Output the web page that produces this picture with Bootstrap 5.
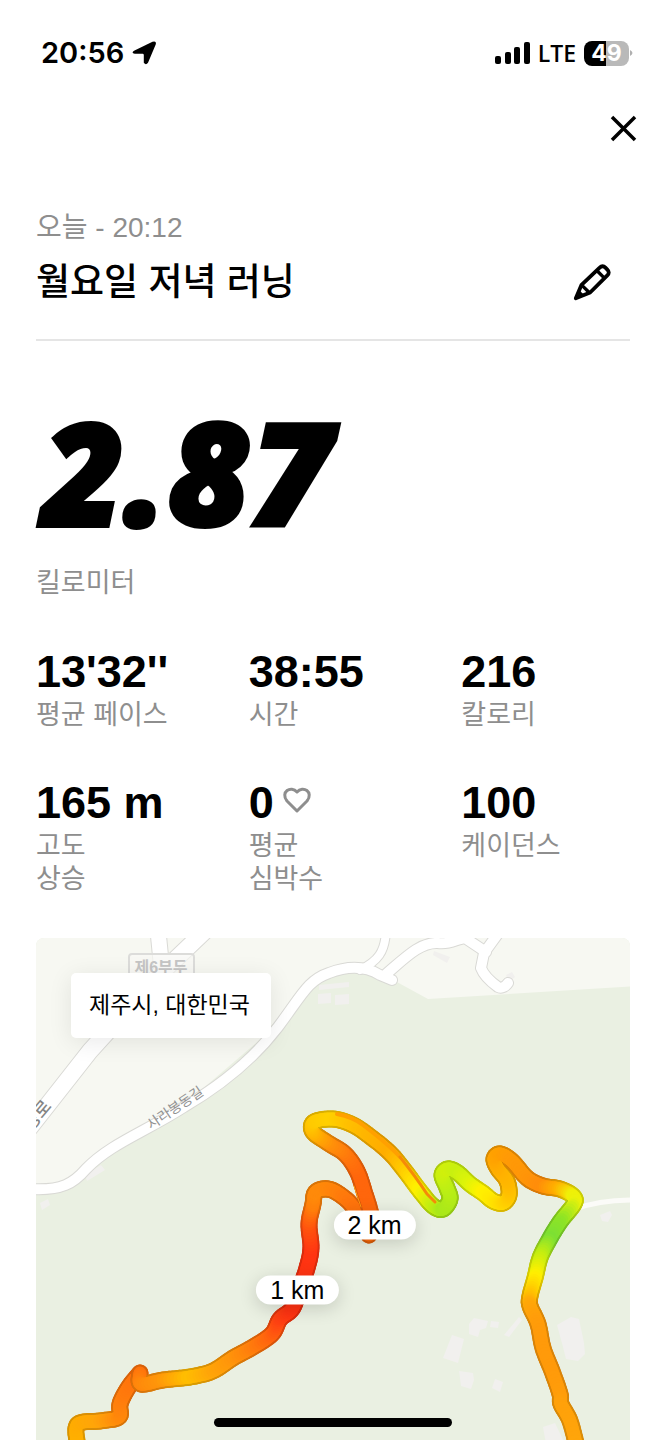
<!DOCTYPE html>
<html lang="ko">
<head>
<meta charset="utf-8">
<meta name="viewport" content="width=device-width, initial-scale=1">
<title>월요일 저녁 러닝</title>
<link href="https://cdn.jsdelivr.net/npm/bootstrap@5.3.0/dist/css/bootstrap.min.css" rel="stylesheet">
<style>
  body { font-family: "Liberation Sans", "Noto Sans CJK KR", sans-serif; color: #000; background: #fff; }
  .side { padding-left: 36px; padding-right: 36px; }
  .statusbar { height: 106px; padding: 0 33px 0 41px; font-family: Inter, "Noto Sans CJK KR", sans-serif; }
  .clock { font-size: 29px; font-weight: 600; line-height: 32px; }
  .lte { font-family: "Open Sans", sans-serif; font-size: 23px; font-weight: 600; line-height: 32px; }
  .battery { width: 45px; height: 25px; border-radius: 8px; background: linear-gradient(90deg, #000 49%, #b9b9b9 49%); color: #fff; font-size: 23px; font-weight: 700; line-height: 25px; }
  .icon-btn { border: 0; background: none; padding: 0; color: #000; display: block; }
  .close-row { height: 44px; padding-right: 29px; }
  .caption { font-size: 27px; line-height: 33px; color: #8e8e8e; }
  .run-date { font-size: 28px; }
  .run-head { margin-top: 61px; padding-bottom: 32px; border-bottom: 2px solid #e5e5e5; }
  .run-title { font-size: 37px; line-height: 48px; font-weight: 500; margin: 15px 0 0; }
  .distance { font-family: "Open Sans", sans-serif; font-weight: 800; font-style: italic; font-size: 142px; line-height: 148px; margin: 56px 0 22px; padding-left: 6px; -webkit-text-stroke: 4px #000; }
  .stats { --bs-gutter-x: 44px; --bs-gutter-y: 45px; margin-top: 1px; padding-bottom: 42px; }
  .value { font-size: 45px; font-weight: 700; line-height: 52px; margin-bottom: 1px; }
  .route-map { aspect-ratio: 594 / 503; border-radius: 8px 8px 0 0; background: #eaf0e2; }
  .place { left: 35px; top: 35px; min-width: 200px; padding: 16px 18px; font-size: 23px; line-height: 33px; background: #fff; border-radius: 5px; box-shadow: 0 4px 24px rgba(0,0,0,.09); }
  .pin { font-size: 25px; line-height: 29px; padding: 0 14px; background: #fff; border-radius: 15px; box-shadow: 0 4px 18px rgba(0,0,0,.16); }
  .pin-1 { left: 44%; top: 70%; }
  .pin-2 { left: 57%; top: 57%; }
  .home-bar { width: 238px; height: 9px; bottom: 14px; border-radius: 5px; background: #000; }
</style>
</head>
<body>
<header class="statusbar d-flex align-items-center justify-content-between">
  <div class="d-flex align-items-center gap-2">
    <span class="clock">20:56</span>
    <svg width="25" height="24" viewBox="0 0 25 24" aria-hidden="true"><path d="M2.500 9.500 20.500.8Q24.800-.5 23.700 3.500L16 21.700Q14 24.500 11.800 21.800V14Q11.800 12.800 10.600 12.800H2.800Q-1.500 11.800 2.500 9.500Z"/></svg>
  </div>
  <div class="d-flex align-items-center gap-2">
    <svg width="35" height="22" viewBox="0 0 35 22" aria-hidden="true"><rect y="14" width="6" height="8" rx="2"/><rect x="10" y="10" width="6" height="12" rx="2"/><rect x="19" y="5" width="6" height="17" rx="2"/><rect x="29" width="6" height="22" rx="2"/></svg>
    <span class="lte">LTE</span>
    <span class="d-flex align-items-center"><span class="battery text-center">49</span><svg width="4" height="8" viewBox="0 0 4 8" aria-hidden="true"><path d="M1 1Q6 4 1 7Z" fill="#b0b0b0"/></svg></span>
  </div>
</header>

<div class="close-row d-flex justify-content-end align-items-center">
  <button class="icon-btn" type="button" aria-label="닫기"><svg class="d-block" width="27" height="27" viewBox="0 0 27 27"><path d="M2 2 25 25M25 2 2 25" fill="none" stroke="#000" stroke-width="3.500"/></svg></button>
</div>

<main class="side">
  <section class="run-head">
    <div class="caption run-date">오늘 - 20:12</div>
    <div class="d-flex justify-content-between align-items-end">
      <h1 class="run-title">월요일 저녁 러닝</h1>
      <button class="icon-btn me-3 mb-1" type="button" aria-label="이름 편집"><svg class="d-block" width="42" height="42" viewBox="0 0 44 44"><g fill="none" stroke="#000" stroke-width="4" stroke-linejoin="round"><path d="M4 39 10 25 29 7Q32 4 35 7L37 9Q40 12 37 15L19 33Z"/><path d="m26 10 8 8M11 26l7 7" stroke-width="3.500"/></g><path d="m5 39 3-8 5 5Z"/></svg></button>
    </div>
  </section>

  <section>
    <div class="distance">2.87</div>
    <div class="caption">킬로미터</div>
  </section>

  <section class="row row-cols-3 stats">
    <div class="col"><div class="value">13'32''</div><div class="caption">평균 페이스</div></div>
    <div class="col"><div class="value">38:55</div><div class="caption">시간</div></div>
    <div class="col"><div class="value">216</div><div class="caption">칼로리</div></div>
    <div class="col"><div class="value">165 m</div><div class="caption">고도<br>상승</div></div>
    <div class="col"><div class="value d-flex align-items-center">0<svg class="ms-2 mb-1" width="30" height="28" viewBox="0 0 30 28" aria-hidden="true"><path d="M15 24 5 14C-2 5 9-2 15 5 21-2 32 5 25 14Z" fill="none" stroke="#8e8e8e" stroke-width="3" stroke-linejoin="round"/></svg></div><div class="caption">평균<br>심박수</div></div>
    <div class="col"><div class="value">100</div><div class="caption">케이던스</div></div>
  </section>

  <section class="route-map position-relative overflow-hidden" aria-label="러닝 경로">
    <svg class="d-block w-100 h-100" viewBox="36 937 594 503" preserveAspectRatio="xMidYMin slice">
      <path d="M30 930H640V985L428 998 395 980 350 970 310 985 270 1030 200 1090 100 1152 60 1188 30 1190Z" fill="#f7f8f2"/>
      <g fill="#f1f0ee">
        <path d="m319 984 30-3v5l-30 3ZM318 993l13-1v10l-13 1ZM335 994l14-1v10l-14 1ZM434 950l16 6-3 6-14-8ZM85 1174l16-10 4 5-18 11ZM40 1202l8-4 2 6-8 5ZM506 974l6-3 3 5-6 5Z"/>
        <path d="m452 1334 12 4-6 24-15-5ZM469 1323l5-6 14 3-2 7-6 2-2 7-9-3ZM491 1320l8 1-1 6-8-1ZM504 1334l15-18 3 3-13 17ZM557 1324l14-8 8 2 5 24 1 11-7 7-12-2-3-12ZM459 1370l14 2 1 7-3 9-10-3ZM495 1378l8 3-3 10-8-4ZM543 1426l12-4 10 21-18 5ZM600 1214l10-4 2 4-4 7-6-1Z"/>
      </g>
      <g id="roads" fill="none" stroke-linecap="round" stroke-linejoin="round"></g>
      <path d="M575 1208Q600 1199 635 1199" fill="none" stroke="#fbfbf8" stroke-width="5"/>
      <rect x="129" y="953" width="65" height="34" rx="3" fill="#f8f8f5" fill-opacity=".7" stroke="#dcdcda" stroke-width="2"/>
      <text x="161" y="972" text-anchor="middle" font-size="16" font-weight="700" fill="#c5c5c5">제6부두</text>
      <text transform="translate(151 1129) rotate(-34)" font-size="14" fill="#929292">사라봉동길</text>
      <text transform="translate(31 1131) rotate(-50)" font-size="18" font-weight="500" fill="#858585">명로</text>
      <g id="route" fill="none" stroke-linecap="round" stroke-linejoin="round"></g>
    </svg>
    <div class="place position-absolute">제주시, 대한민국</div>
    <div class="pin pin-2 position-absolute translate-middle text-nowrap">2 km</div>
    <div class="pin pin-1 position-absolute translate-middle text-nowrap">1 km</div>
    <div class="home-bar position-absolute start-50 translate-middle-x"></div>
  </section>
</main>

<script src="https://cdn.jsdelivr.net/npm/bootstrap@5.3.0/dist/js/bootstrap.bundle.min.js"></script>
<script>
  const NS = 'http://www.w3.org/2000/svg';
  const add = (parent, d, color, width) => {
    const p = document.createElementNS(NS, 'path');
    p.setAttribute('d', d);
    p.setAttribute('stroke', color);
    p.setAttribute('stroke-width', width);
    parent.appendChild(p);
  };

  // Roads: casing below, white surface above.
  const roads = [
    ['M30 1188C62 1190 74 1182 86 1168 110 1143 145 1131 184 1106 225 1082 255 1056 278 1026 302 994 308 979 329 972 350 964 367 966 380 974L392 979', 10],
    ['M360 969C378 960 385 951 386 930', 8],
    ['M385 974C405 957 420 941 438 942 449 944 457 938 465 937L486 951', 10],
    ['M500 930 484 952 481 967C484 975 491 981 498 986 502 988 506 985 508 982', 10],
    ['M24 1134 90 1050 160 973 205 930', 16],
    ['M158 930 162 970', 15]
  ];
  const roadLayer = document.getElementById('roads');
  roads.forEach(([d, w]) => add(roadLayer, d, '#d9d9d5', w + 2));
  roads.forEach(([d, w]) => add(roadLayer, d, '#ffffff', w));

  // Pace colours run along the route: [x, y, colour].
  const stretches = [
    [[79,1450,'#ffb600'],[77,1424,'#ffac00'],[100,1420,'#ffa40a'],[119,1416,'#ff8a0a'],[120,1403,'#ff820c'],[128,1387,'#ff780c'],[140,1372,'#ff700c']],
    [[140,1372,'#ff700c'],[141,1383,'#ff860c'],[163,1379,'#ff960a'],[190,1376,'#ffbe00'],[213,1370,'#ffa608'],[233,1357,'#ff960a'],[253,1346,'#ff800c'],[272,1333,'#ff620e'],[280,1318,'#ff4412'],[292,1308,'#ff3412'],[299,1290,'#ff3012'],[307,1267,'#ff3412'],[311,1247,'#ff3412'],[309,1223,'#ff520e'],[313,1203,'#ff800a'],[315,1192,'#ff8a0a'],[323,1188,'#ff8a0a'],[334,1190,'#ff840a'],[350,1202,'#ff760c'],[364,1222,'#ff700c'],[369,1234,'#ff6c0c']],
    [[369,1234,'#ff6c0c'],[371,1215,'#ff6c0c'],[364,1190,'#ff660c'],[357,1170,'#ff660c'],[345,1153,'#ff760c'],[328,1142,'#ff8e0a'],[313,1131,'#ffb400'],[314,1121,'#ffc800'],[333,1118,'#ffd000'],[353,1124,'#ffc000'],[372,1137,'#ffb400'],[390,1152,'#ffac00'],[405,1170,'#ffc800'],[420,1190,'#fff000'],[433,1205,'#c8ee10'],[443,1208,'#a8e81c'],[450,1198,'#b0ea18'],[447,1187,'#b8ee16'],[442,1174,'#c8f010'],[448,1168,'#d0f00c'],[458,1172,'#c8f010'],[470,1183,'#dcf40a'],[483,1192,'#fff200'],[493,1200,'#ffe800'],[503,1202,'#ffd800'],[509,1194,'#ffc800'],[507,1180,'#ffb800'],[498,1168,'#ffb000'],[494,1158,'#ffa600'],[500,1153,'#ffa000'],[512,1160,'#ff9a06'],[527,1177,'#ff9608'],[543,1185,'#ff8c0a'],[560,1188,'#ffb000'],[573,1195,'#f0f008'],[574,1203,'#ecf20a'],[560,1221,'#90e424'],[549,1239,'#7ce034'],[540,1257,'#c4ee10'],[535,1277,'#fff000'],[530,1295,'#ffc400'],[530,1305,'#ffa808'],[538,1323,'#ff9c0a'],[543,1347,'#ff9a0a'],[552,1370,'#ff9a0a'],[560,1393,'#ff9c0a'],[561,1403,'#ffa00a'],[570,1420,'#ffa20a'],[578,1450,'#ffa60a']]
  ];
  const rgb = hex => [1, 3, 5].map(i => parseInt(hex.slice(i, i + 2), 16));
  const curve = (a, b, c, d, t) => .5 * (2 * b + (c - a) * t + (2 * a - 5 * b + 4 * c - d) * t * t + (3 * b - a - 3 * c + d) * t * t * t);
  const layer = document.getElementById('route');
  const STEPS = 8;
  stretches.forEach(points => {
    const pieces = [];
    for (let i = 0; i < points.length - 1; i++) {
      const q = [points[Math.max(i - 1, 0)], points[i], points[i + 1], points[Math.min(i + 2, points.length - 1)]];
      const at = t => [0, 1].map(k => curve(q[0][k], q[1][k], q[2][k], q[3][k], t).toFixed(1)).join(' ');
      const c1 = rgb(q[1][2]), c2 = rgb(q[2][2]);
      for (let s = 0; s < STEPS; s++) {
        const mix = c1.map((v, k) => v + (c2[k] - v) * (s + .5) / STEPS);
        pieces.push(['M' + at(s / STEPS) + 'L' + at((s + 1) / STEPS), mix]);
      }
    }
    pieces.forEach(([d, c]) => add(layer, d, `rgb(${c.map(v => Math.round(v * .85))})`, 17));
    pieces.forEach(([d, c]) => add(layer, d, `rgb(${c.map(Math.round)})`, 13));
  });
  // Faint traces of the return leg over the wide part of the loop.
  add(layer, 'M337 1113Q353 1116 363 1124 388 1143 400 1156', '#ffa000', 4);
  add(layer, 'M400 1156Q416 1176 427 1193L435 1201', '#f58a08', 3);
  add(layer, 'M354 1185Q358 1197 361 1206', '#ff9a10', 1);
</script>
</body>
</html>
